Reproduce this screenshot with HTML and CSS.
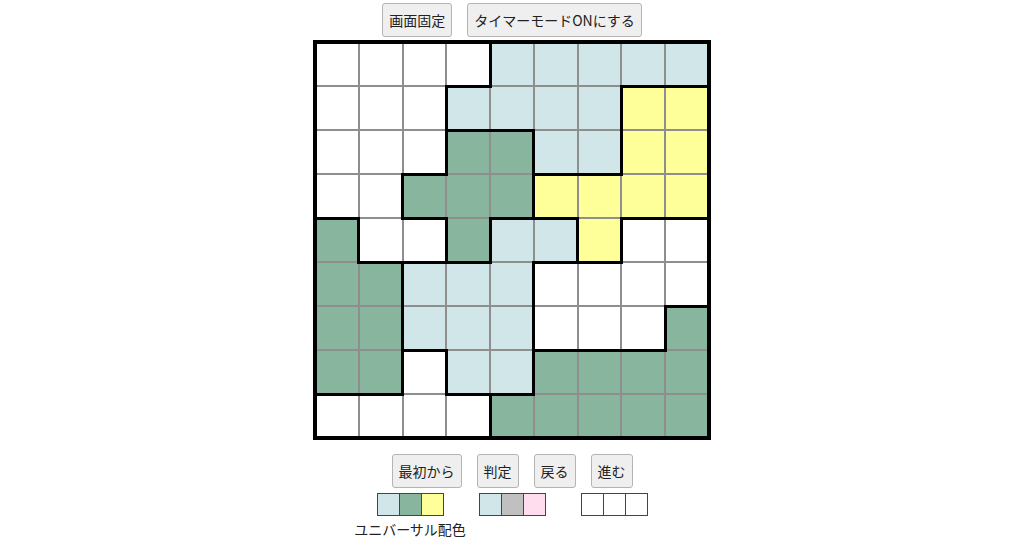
FILE: index.html
```html
<!DOCTYPE html>
<html lang="ja">
<head>
<meta charset="utf-8">
<title>パズル</title>
<link rel="stylesheet" href="styles.css">
</head>
<body>
<div class="page">
  <div class="btn-row top">
    <button class="btn">画面固定</button>
    <button class="btn">タイマーモードONにする</button>
  </div>
  <table class="board">
    <tr><td class="w"></td><td class="w"></td><td class="w"></td><td class="w"></td><td class="b l"></td><td class="b"></td><td class="b"></td><td class="b"></td><td class="b"></td></tr>
    <tr><td class="w"></td><td class="w"></td><td class="w"></td><td class="b t l"></td><td class="b"></td><td class="b"></td><td class="b"></td><td class="y t l"></td><td class="y t"></td></tr>
    <tr><td class="w"></td><td class="w"></td><td class="w"></td><td class="g t l"></td><td class="g t"></td><td class="b l"></td><td class="b"></td><td class="y l"></td><td class="y"></td></tr>
    <tr><td class="w"></td><td class="w"></td><td class="g t l"></td><td class="g"></td><td class="g"></td><td class="y t l"></td><td class="y t"></td><td class="y"></td><td class="y"></td></tr>
    <tr><td class="g t"></td><td class="w l"></td><td class="w t"></td><td class="g l"></td><td class="b t l"></td><td class="b t"></td><td class="y l"></td><td class="w t l"></td><td class="w t"></td></tr>
    <tr><td class="g"></td><td class="g t"></td><td class="b t l"></td><td class="b t"></td><td class="b"></td><td class="w t l"></td><td class="w t"></td><td class="w"></td><td class="w"></td></tr>
    <tr><td class="g"></td><td class="g"></td><td class="b l"></td><td class="b"></td><td class="b"></td><td class="w l"></td><td class="w"></td><td class="w"></td><td class="g t l"></td></tr>
    <tr><td class="g"></td><td class="g"></td><td class="w t l"></td><td class="b l"></td><td class="b"></td><td class="g t l"></td><td class="g t"></td><td class="g t"></td><td class="g"></td></tr>
    <tr><td class="w t"></td><td class="w t"></td><td class="w"></td><td class="w t"></td><td class="g t l"></td><td class="g"></td><td class="g"></td><td class="g"></td><td class="g"></td></tr>
  </table>
  <div class="btn-row bottom">
    <button class="btn">最初から</button>
    <button class="btn">判定</button>
    <button class="btn">戻る</button>
    <button class="btn">進む</button>
  </div>
  <div class="palettes">
    <div class="palette-group">
      <div class="palette">
        <span class="sw b"></span><span class="sw g"></span><span class="sw y"></span>
      </div>
      <div class="palette-label"><span>ユニバーサル配色</span></div>
    </div>
    <div class="palette-group">
      <div class="palette">
        <span class="sw b"></span><span class="sw gray"></span><span class="sw pink"></span>
      </div>
    </div>
    <div class="palette-group">
      <div class="palette">
        <span class="sw w"></span><span class="sw w"></span><span class="sw w"></span>
      </div>
    </div>
  </div>
</div>
</body>
</html>
```
FILE: styles.css
```css
html, body {
  margin: 0;
  padding: 0;
  background: #ffffff;
}
body {
  font-family: "Noto Sans CJK JP", "Noto Sans", sans-serif;
  color: #222;
}
.page {
  display: flex;
  flex-direction: column;
  align-items: center;
  padding-top: 3px;
}
.btn-row {
  display: flex;
  justify-content: center;
}
.btn-row.top { gap: 15px; }
.btn-row.bottom { gap: 15px; margin-top: 14px; }
.btn {
  font-family: "Noto Sans CJK JP", "Noto Sans", sans-serif;
  font-size: 14px;
  line-height: 20px;
  height: 34px;
  padding: 0 6px;
  background: #efefef;
  color: #222;
  border: 1px solid #b4b4b4;
  border-radius: 3px;
}
.board {
  margin-top: 3px;
  border-collapse: collapse;
  table-layout: fixed;
  width: 398px;
  border: 4px solid #000;
}
.board tr {
  height: 44px;
}
.board td {
  padding: 0;
  border: 2px solid #8e8e8e;
}
.board td.t { border-top: 3px solid #000; }
.board td.l { border-left: 3px solid #000; }
.w { background: #ffffff; }
.b { background: #d0e6e8; }
.g { background: #88b59d; }
.y { background: #ffff99; }
.gray { background: #c0c0c0; }
.pink { background: #ffdcee; }
.palettes {
  display: flex;
  gap: 35px;
  margin-top: 5px;
}
.palette-group {
  display: flex;
  flex-direction: column;
  width: 67px;
}
.palette {
  display: flex;
  border: 1px solid #444;
  border-right: none;
  width: 66px;
  height: 21px;
}
.sw {
  width: 21px;
  height: 21px;
  border-right: 1px solid #444;
}
.palette-label {
  display: flex;
  justify-content: center;
  margin-top: 3px;
  font-size: 14px;
  line-height: 20px;
  white-space: nowrap;
  color: #222;
}
```
